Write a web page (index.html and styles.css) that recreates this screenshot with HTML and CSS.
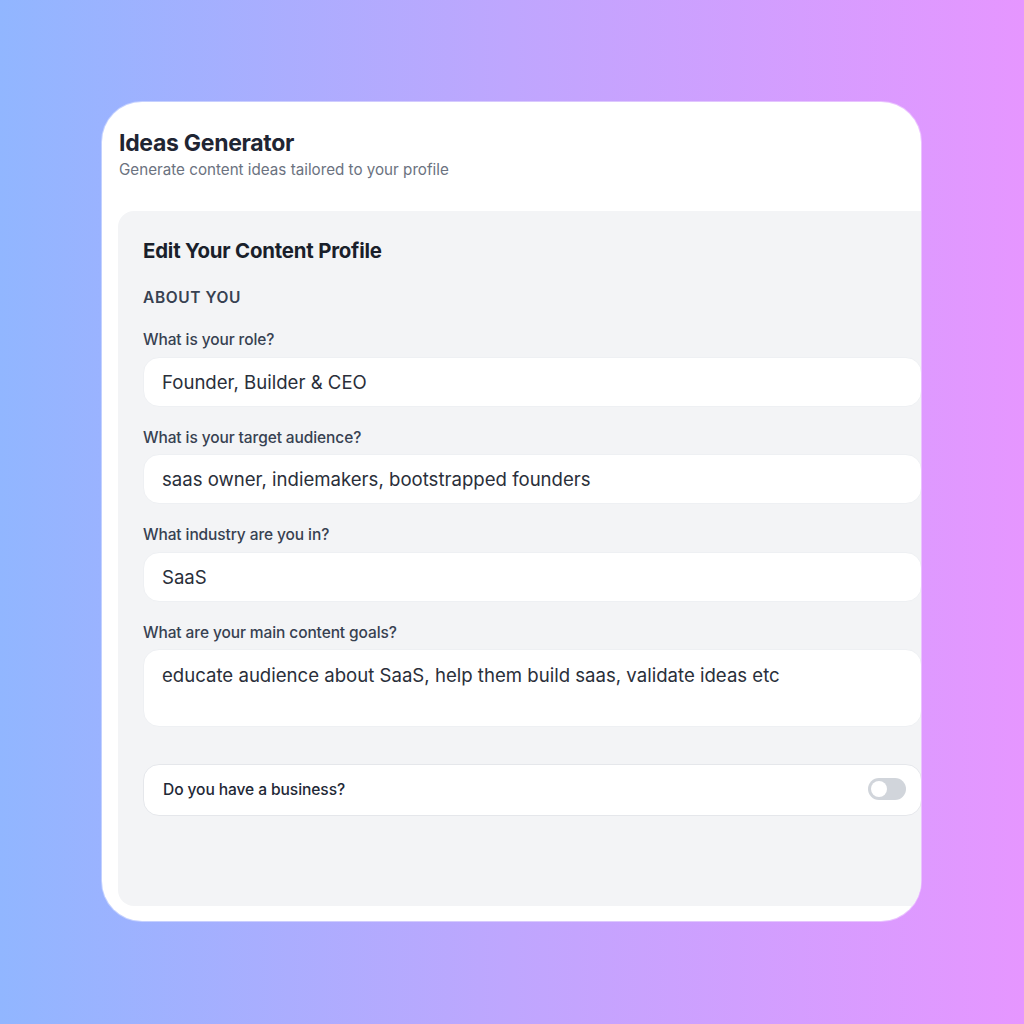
FILE: index.html
```html
<!DOCTYPE html>
<html>
<head>
<meta charset="utf-8">
<link rel="stylesheet" href="styles.css">
</head>
<body>
<div class="stage">
  <div class="card">
    <header class="head">
      <h1 class="title">Ideas Generator</h1>
      <p class="subtitle">Generate content ideas tailored to your profile</p>
    </header>
    <section class="panel">
      <h2 class="panel-title">Edit Your Content Profile</h2>
      <h3 class="section-label">ABOUT YOU</h3>
      <div class="field">
        <label class="label">What is your role?</label>
        <div class="input">Founder, Builder &amp; CEO</div>
      </div>
      <div class="field">
        <label class="label">What is your target audience?</label>
        <div class="input">saas owner, indiemakers, bootstrapped founders</div>
      </div>
      <div class="field">
        <label class="label">What industry are you in?</label>
        <div class="input">SaaS</div>
      </div>
      <div class="field">
        <label class="label">What are your main content goals?</label>
        <div class="input textarea">educate audience about SaaS, help them build saas, validate ideas etc</div>
      </div>
      <div class="toggle-row">
        <span class="toggle-label">Do you have a business?</span>
        <span class="switch"><span class="knob"></span></span>
      </div>
    </section>
  </div>
</div>
</body>
</html>
```
FILE: styles.css
```css
* { box-sizing: border-box; }
html, body { margin: 0; padding: 0; }
body {
  width: 1024px;
  height: 1024px;
  font-family: Inter, "Noto Sans", sans-serif;
  background: linear-gradient(90deg, #91b6ff 0%, #bfa6fe 50%, #e696ff 100%);
  overflow: hidden;
}
.stage {
  padding: 102px 0 0 102px;
}
.card {
  width: 819px;
  height: 819px;
  background: #ffffff;
  border-radius: 40px;
  overflow: hidden;
  padding: 27px 0 15px 16px;
  display: flex;
  flex-direction: column;
  box-shadow: 0 0 0 1px rgba(255,255,255,0.4);
}
.head { padding-left: 1px; }
.title {
  margin: 0;
  font-size: 23px;
  font-weight: 700;
  color: #1f2533;
  letter-spacing: -0.3px;
  line-height: 28px;
}
.subtitle {
  margin: 3px 0 0;
  font-size: 15.2px;
  color: #6b7280;
  line-height: 20px;
}
.panel {
  margin-top: 31px;
  flex: 1;
  width: 830px;
  background: #f3f4f6;
  border-radius: 16px 0 0 16px;
  padding: 26px 25px 0 25px;
}
.panel-title {
  margin: 0;
  font-size: 20.4px;
  font-weight: 700;
  color: #1a1f2b;
  letter-spacing: -0.2px;
  line-height: 28px;
}
.section-label {
  margin: 23px 0 0;
  font-size: 15.5px;
  font-weight: 600;
  color: #374151;
  letter-spacing: 0.6px;
  line-height: 20px;
}
.field { margin-top: 22px; }
.field + .field { margin-top: 21px; }
.label {
  display: block;
  font-size: 15.5px;
  font-weight: 500;
  color: #374151;
  line-height: 20px;
  letter-spacing: -0.1px;
}
.input {
  margin-top: 6.5px;
  width: 779px;
  height: 50px;
  background: #ffffff;
  border: 1px solid #eef0f3;
  border-radius: 16px;
  padding: 0 18px;
  display: flex;
  align-items: center;
  font-size: 18.6px;
  color: #2a2f3a;
}
.textarea {
  height: 78px;
  align-items: flex-start;
  padding-top: 14px;
  line-height: 22px;
}
.toggle-row {
  margin-top: 37px;
  width: 779px;
  height: 52px;
  background: #ffffff;
  border: 1px solid #e5e7eb;
  border-radius: 16px;
  display: flex;
  align-items: center;
  justify-content: space-between;
  padding: 0 15px 2px 19px;
}
.toggle-label {
  font-size: 15.6px;
  font-weight: 500;
  color: #1f2937;
  letter-spacing: -0.1px;
}
.switch {
  width: 38px;
  height: 22px;
  border-radius: 11px;
  background: #d1d5db;
  padding: 3px;
  display: flex;
  align-items: center;
}
.knob {
  width: 16px;
  height: 16px;
  border-radius: 50%;
  background: #ffffff;
}
```
